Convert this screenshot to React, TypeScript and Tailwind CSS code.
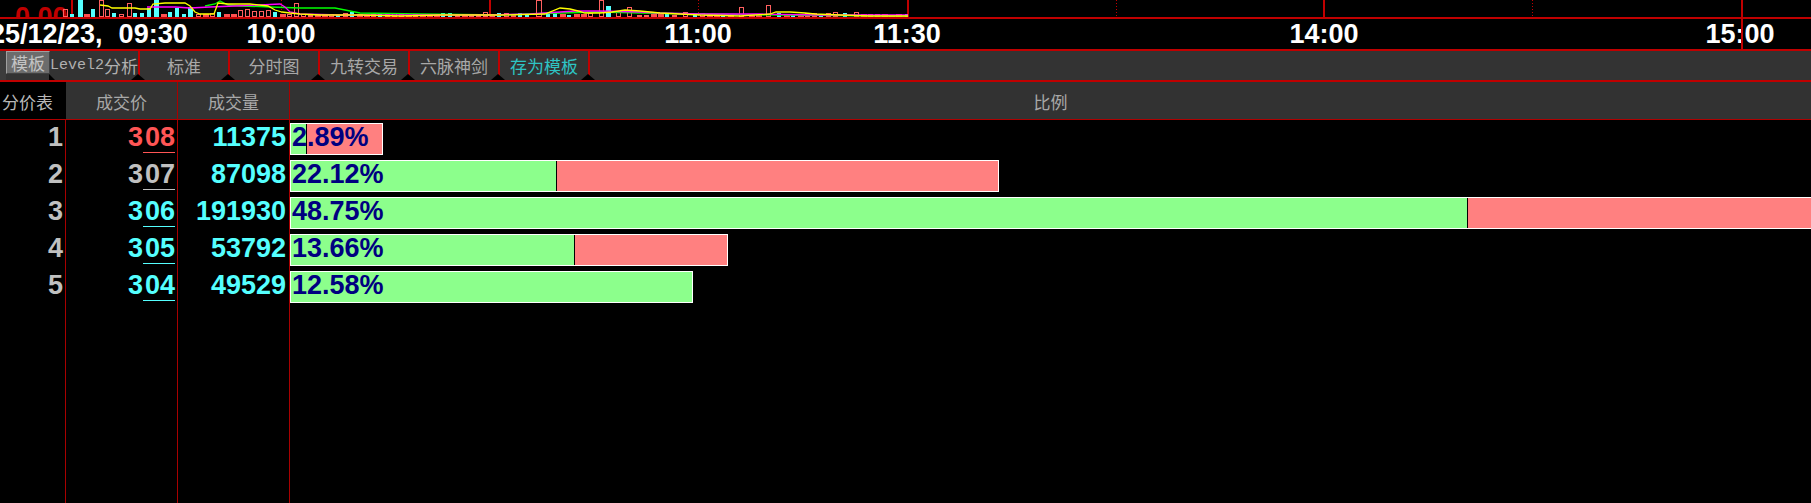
import React from "react";

type Bar = { x: number; w: number; y: number; type: "h" | "f" | "c" };

const OVERRIDES: Bar[] = [
  { x: 78, w: 5, y: 0, type: "c" },
  { x: 99, w: 4, y: 0, type: "h" },
  { x: 127, w: 4, y: 3, type: "h" },
  { x: 154, w: 5, y: 0, type: "c" },
  { x: 188, w: 5, y: 7, type: "c" },
  { x: 294, w: 4, y: 3, type: "h" },
  { x: 536, w: 5, y: 0, type: "h" },
  { x: 599, w: 4, y: 0, type: "h" },
  { x: 606, w: 5, y: 6, type: "c" },
  { x: 627, w: 4, y: 7, type: "h" },
  { x: 683, w: 4, y: 12, type: "h" },
  { x: 739, w: 4, y: 7, type: "h" },
  { x: 766, w: 4, y: 5, type: "h" },
  { x: 843, w: 4, y: 13, type: "c" },
  { x: 905, w: 3, y: 14, type: "c" },
];

function makeBars(): Bar[] {
  let s = 12345;
  const r = () => {
    s = (s * 16807) % 2147483647;
    return s / 2147483647;
  };
  const out: Bar[] = [];
  for (let x = 63; x < 902; x += 7) {
    const a = r();
    const b = r();
    if (OVERRIDES.some((o) => Math.abs(o.x - x) < 6)) continue;
    const early = x < 300;
    const type: Bar["type"] = a < 0.5 ? "h" : a < 0.78 ? "f" : "c";
    let h = early ? 3 + Math.floor(b * 7) : 2 + Math.floor(b * 4);
    if (type === "f") h = Math.min(h, 3);
    out.push({ x, w: type === "f" ? 6 : 4, y: 17 - h, type });
  }
  return [...out, ...OVERRIDES];
}

const CHART_BARS = makeBars();

const YELLOW =
  "100,5 108,6 112,8 125,8 135,8 140,9 150,9 153,4 165,3 185,3 190,6 195,12 200,14 214,14 218,3 228,4 250,4 268,6 275,10 282,12 290,13 300,14 320,15 360,15 400,16 440,15 500,15 545,14 560,8 570,9 578,11 585,13 600,13 612,12 625,10 640,11 660,13 700,15 740,16 770,14 776,12 790,12 805,13 815,14 840,15 870,16 908,16";
const MAGENTA =
  "147,7 175,7 190,8 210,7 235,6 260,5 280,4 285,7 290,12 300,14 340,15 420,15 480,15 530,14 560,12 575,11 600,11 640,12 660,13 700,14 760,14 820,15 908,15";
const GREEN =
  "205,6 215,4 220,1 228,5 240,6 270,7 300,8 335,8 345,10 360,13 420,14 500,15 560,13 600,12 640,13 700,14 780,15 908,16";

function ChartStrip() {
  return (
    <div className="relative h-[19px] shrink-0 overflow-hidden border-b-2 border-[#c00000]">
      <span className="absolute left-[15px] top-[4px] text-[27px] font-bold leading-none text-[#c00000]">
        0.00
      </span>
      <svg className="absolute left-0 top-0" width={1811} height={17} viewBox="0 0 1811 17">
        {[72, 490, 908, 1324, 1742].map((x) => (
          <line key={x} x1={x} y1={0} x2={x} y2={17} stroke="#c00000" strokeWidth={2} />
        ))}
        {[281, 698, 1116, 1532].map((x) => (
          <line key={x} x1={x + 0.5} y1={0} x2={x + 0.5} y2={17} stroke="#c00000" strokeWidth={1} strokeDasharray="1 2" />
        ))}
        {CHART_BARS.map((b, i) =>
          b.type === "h" ? (
            <rect key={i} x={b.x + 0.5} y={b.y + 0.5} width={b.w} height={Math.max(17 - b.y - 1, 1)} fill="none" stroke="#ff6060" strokeWidth={1} />
          ) : (
            <rect key={i} x={b.x} y={b.y} width={b.w} height={17 - b.y} fill={b.type === "c" ? "#55ffff" : "#ff5050"} />
          )
        )}
        <polyline points={GREEN} fill="none" stroke="#00ff00" strokeWidth={1.3} />
        <polyline points={MAGENTA} fill="none" stroke="#ff00ff" strokeWidth={1.3} />
        <polyline points={YELLOW} fill="none" stroke="#ffff00" strokeWidth={1.3} />
      </svg>
    </div>
  );
}

function TimeAxis() {
  return (
    <div className="relative h-[32px] shrink-0 border-b-2 border-[#c00000] text-[27px] font-bold leading-none text-white">
      <div className="absolute left-[-10px] top-[2px] flex gap-[16px] whitespace-nowrap">
        <span>25/12/23,</span>
        <span>09:30</span>
      </div>
      <span className="absolute left-[281px] top-[2px] -translate-x-1/2">10:00</span>
      <span className="absolute left-[698px] top-[2px] -translate-x-1/2">11:00</span>
      <span className="absolute left-[907px] top-[2px] -translate-x-1/2">11:30</span>
      <span className="absolute left-[1324px] top-[2px] -translate-x-1/2">14:00</span>
      <span className="absolute left-[1740px] top-[2px] -translate-x-1/2">15:00</span>
      <div className="absolute left-[1741px] top-0 h-full w-[2px] bg-[#c00000]" />
    </div>
  );
}

function Triangle() {
  return (
    <div className="absolute -right-[7px] bottom-0 z-10 h-0 w-0 border-b-[6px] border-l-[7px] border-r-[7px] border-b-black border-l-transparent border-r-transparent" />
  );
}

const TABS = ["标准", "分时图", "九转交易", "六脉神剑"];

function TabBar() {
  return (
    <div className="flex h-[31px] shrink-0 border-b-2 border-[#c00000] bg-[#333333] font-['Noto_Sans_CJK_SC',sans-serif] text-[17px] leading-none text-[#a8a8a8]">
      <div className="w-[6px] shrink-0 bg-[#3c3c3c]" />
      <div className="flex h-[23px] w-[44px] shrink-0 items-center justify-center border border-b-[#404040] border-l-[#a0a0a0] border-r-[#404040] border-t-[#a0a0a0] bg-[#6c6c6c] text-[#c4c4c4]">
        模板
      </div>
      <div className="relative flex w-[90px] shrink-0 items-center justify-center border-r-2 border-[#c00000] text-[#b0b0b0]">
        <div className="absolute -left-[1px] bottom-0 h-0 w-0 border-b-[6px] border-r-[6px] border-b-black border-r-transparent" />
        <span className="font-['Liberation_Mono',monospace] text-[15px]">Level2</span>
        <span>分析</span>
        <Triangle />
      </div>
      {TABS.map((t) => (
        <div key={t} className="relative flex w-[90px] shrink-0 items-center justify-center border-r-2 border-[#c00000]">
          {t}
          <Triangle />
        </div>
      ))}
      <div className="relative flex w-[90px] shrink-0 items-center justify-center border-r-2 border-[#c00000] text-[#2ec4c4]">
        存为模板
        <Triangle />
      </div>
      <div className="flex-1" />
    </div>
  );
}

function Header() {
  return (
    <div className="grid h-[38px] shrink-0 grid-cols-[66px_112px_112px_1fr] border-b border-[#b00000] bg-[#323232] font-['Noto_Sans_CJK_SC',sans-serif] text-[17px] leading-none text-[#a8a8a8]">
      <div className="flex items-center justify-end whitespace-nowrap bg-black pr-[13px] pt-[2px] text-[#b8b8b8]">分价表</div>
      <div className="flex items-center justify-center border-r border-[#a80000] pt-[2px]">成交价</div>
      <div className="flex items-center justify-center border-r border-[#a80000] pt-[2px]">成交量</div>
      <div className="flex items-center justify-center pt-[2px]">比例</div>
    </div>
  );
}

type Row = {
  idx: number;
  price: string;
  priceColor: string;
  vol: string;
  green: number;
  red: number;
  pct: string;
};

const ROWS: Row[] = [
  { idx: 1, price: "308", priceColor: "text-[#ff5555]", vol: "11375", green: 15, red: 75, pct: "2.89%" },
  { idx: 2, price: "307", priceColor: "text-[#c0c0c0]", vol: "87098", green: 265, red: 441, pct: "22.12%" },
  { idx: 3, price: "306", priceColor: "text-[#55ffff]", vol: "191930", green: 1176, red: 600, pct: "48.75%" },
  { idx: 4, price: "305", priceColor: "text-[#55ffff]", vol: "53792", green: 283, red: 152, pct: "13.66%" },
  { idx: 5, price: "304", priceColor: "text-[#55ffff]", vol: "49529", green: 401, red: 0, pct: "12.58%" },
];

function Body() {
  return (
    <div className="grid min-h-0 flex-1 grid-cols-[66px_112px_112px_1fr] text-[27px] font-bold">
      <div className="flex flex-col border-r border-[#a80000] text-[#c0c0c0]">
        {ROWS.map((r) => (
          <div key={r.idx} className="h-[37px] pr-[2px] text-right leading-[35px]">
            {r.idx}
          </div>
        ))}
      </div>
      <div className="flex flex-col border-r border-[#a80000]">
        {ROWS.map((r) => (
          <div key={r.idx} className={`h-[37px] pr-[2px] text-right leading-[35px] ${r.priceColor}`}>
            {r.price.slice(0, 1)}
            <span className="border-b border-current pl-[2px]">{r.price.slice(1)}</span>
          </div>
        ))}
      </div>
      <div className="flex flex-col border-r border-[#a80000] text-[#55ffff]">
        {ROWS.map((r) => (
          <div key={r.idx} className="h-[37px] pr-[3px] text-right leading-[35px]">
            {r.vol}
          </div>
        ))}
      </div>
      <div className="flex flex-col overflow-hidden">
        {ROWS.map((r) => (
          <div key={r.idx} className="h-[37px] shrink-0 pt-[3px]">
            <div className="relative flex h-[32px] w-max border border-white">
              <div className="h-full shrink-0 bg-[#8cff8c]" style={{ width: r.green }} />
              {r.red > 0 && (
                <>
                  <div className="h-full w-px shrink-0 bg-black" />
                  <div className="h-full shrink-0 bg-[#ff8080]" style={{ width: r.red }} />
                </>
              )}
              <span className="absolute left-[1px] top-0 leading-[26px] text-[#000080]">{r.pct}</span>
            </div>
          </div>
        ))}
      </div>
    </div>
  );
}

export default function App() {
  return (
    <div className="flex h-[503px] w-[1811px] flex-col overflow-hidden bg-black font-['Liberation_Sans',Arial,sans-serif]">
      <ChartStrip />
      <TimeAxis />
      <TabBar />
      <Header />
      <Body />
    </div>
  );
}
